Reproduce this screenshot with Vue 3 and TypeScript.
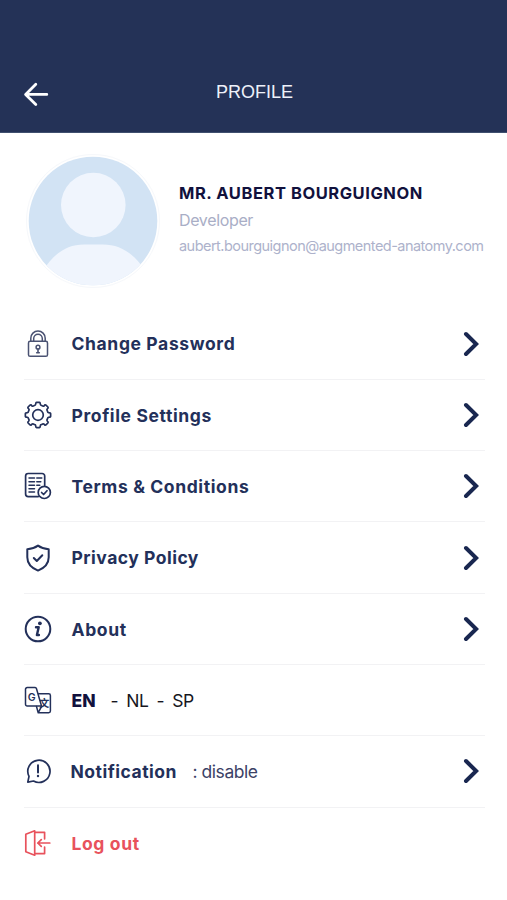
<script setup lang="ts">
interface MenuItem {
  id: string
  label: string
  chevron?: boolean
  status?: string
  danger?: boolean
}

const items: MenuItem[] = [
  { id: 'password', label: 'Change Password', chevron: true },
  { id: 'settings', label: 'Profile Settings', chevron: true },
  { id: 'terms', label: 'Terms & Conditions', chevron: true },
  { id: 'privacy', label: 'Privacy Policy', chevron: true },
  { id: 'about', label: 'About', chevron: true },
  { id: 'language', label: 'EN' },
  { id: 'notification', label: 'Notification', status: ': disable', chevron: true },
  { id: 'logout', label: 'Log out', danger: true },
]

// Outline of an eight-toothed cog centred in the 28px icon box.
function cogPath(): string {
  const at = (deg: number, r: number): string => {
    const a = (deg * Math.PI) / 180
    return `${(14 + r * Math.cos(a)).toFixed(2)} ${(14 + r * Math.sin(a)).toFixed(2)}`
  }
  let d = `M${at(-11, 11.4)}`
  for (let i = 0; i < 8; i++) {
    const c = i * 45
    d += `Q${at(c - 11, 12.7)} ${at(c - 6, 12.7)}L${at(c + 6, 12.7)}Q${at(c + 11, 12.7)} ${at(c + 11, 11.4)}`
    d += `Q${at(c + 13, 9.8)} ${at(c + 22.5, 10.2)}Q${at(c + 32, 9.8)} ${at(c + 34, 11.4)}`
  }
  return d + 'Z'
}
const cog = cogPath()
</script>

<template>
  <main class="screen">
    <header class="bar">
      <svg class="back" viewBox="0 0 26 26">
        <path d="M23.8 13.4H2.8M12.8 3.2L2.6 13.4l10.2 10.2" />
      </svg>
      <h1>PROFILE</h1>
    </header>

    <section class="profile">
      <svg class="avatar" viewBox="0 0 136 136">
        <defs>
          <clipPath id="disc"><circle cx="68" cy="68" r="64.3" /></clipPath>
        </defs>
        <circle cx="68" cy="68" r="66.5" fill="#fff" stroke="#f6f8fb" />
        <g clip-path="url(#disc)">
          <rect width="136" height="136" fill="#d2e3f4" />
          <circle cx="68.3" cy="52" r="32.3" fill="#f0f5fd" />
          <path d="M17 119C29 100 42 91.500 59 91.500h19c17 0 31 8.500 43 27.500v20H17z" fill="#f0f5fd" />
        </g>
      </svg>
      <div class="person">
        <h2>MR. AUBERT BOURGUIGNON</h2>
        <p class="role">Developer</p>
        <p class="mail">aubert.bourguignon@augmented-anatomy.com</p>
      </div>
    </section>

    <ul class="menu">
      <li v-for="item in items" :key="item.id" :class="['row', item.id, { danger: item.danger }]">
        <svg class="icon" viewBox="0 0 28 28">
          <g v-if="item.id === 'password'" stroke-width="1.5" class="soft">
            <rect x="4.5" y="11.3" width="19" height="15" rx="1.6" />
            <path d="M6.8 11V8.200a7.200 7.200 0 0 1 14.400 0V11M9.700 11V8.600a4.300 4.300 0 0 1 8.600 0V11" />
            <circle cx="14" cy="17.2" r="1.9" />
            <path d="M14 19.300v3.400M12.700 22.700h2.600" stroke-width="1.600" />
          </g>
          <g v-else-if="item.id === 'settings'" stroke-width="1.7">
            <path :d="cog" />
            <circle cx="14" cy="14" r="5.3" />
          </g>
          <g v-else-if="item.id === 'terms'" stroke-width="1.7">
            <path d="M14.200 24.600H4.200a2.600 2.600 0 0 1-2.600-2.600V4.100a2.600 2.600 0 0 1 2.600-2.600h13.900a2.600 2.600 0 0 1 2.600 2.600v9.200" />
            <path d="M5 6.100h5.500M12.800 6.100h5M5 9.800h5.500M12.800 9.800h4M5 13.300h5.500M12.800 13.300h3M5 16.700h5.500M5 20h5.500" stroke-width="1.500" />
            <circle cx="20.3" cy="20.4" r="6.1" />
            <path d="M17.600 20.500l2 2 3.400-3.800" />
          </g>
          <g v-else-if="item.id === 'privacy'" stroke-width="2">
            <path d="M14 1.600c3.200 2.400 6.600 3.300 10.700 3.600v8.100c0 6.500-4.200 10.700-10.700 13.300C7.500 24 3.300 19.800 3.300 13.300V5.200C7.400 4.900 10.800 4 14 1.600z" />
            <path d="M9.800 14l3 3 5.500-5.700" />
          </g>
          <g v-else-if="item.id === 'about'">
            <circle cx="14" cy="14" r="12.3" stroke-width="2" />
            <circle class="solid" cx="15.9" cy="8.3" r="1.9" />
            <path d="M12 12.200h2.700l-1.800 7.800h2" stroke-width="2.4" />
          </g>
          <g v-else-if="item.id === 'language'" stroke-width="1.5">
            <path d="M3.200 1.600h7.800a1.500 1.500 0 0 1 1.500 1.100l5 17.300H3.200a1.700 1.700 0 0 1-1.700-1.700V3.300a1.700 1.700 0 0 1 1.700-1.700z" />
            <path d="M14.500 7.800h10.200a1.700 1.700 0 0 1 1.700 1.700v15.500a1.700 1.700 0 0 1-1.700 1.700H14.200L12.500 20.500M14.400 26.400l3.200-6" />
            <text x="3.800" y="14.800" class="glyph latin">G</text>
            <text x="15.200" y="20.800" class="glyph han">文</text>
          </g>
          <g v-else-if="item.id === 'notification'" stroke-width="1.7">
            <path d="M3.800 25.100L5 19.300A11.100 11.100 0 1 1 9.500 24z" />
            <path d="M14 8.200v7.300" stroke-width="2" />
            <circle class="solid" cx="14" cy="19" r="1.2" />
          </g>
          <g v-else stroke-width="1.7">
            <path d="M1.800 5.300l8.900-3.500v24.400l-8.900-3.500zM10.700 3.300h9.900v6.500M10.700 24.600h9.900v-6.400" />
            <path d="M25.800 14H13.700M17.300 10.700L13.800 14l3.500 3.300" />
          </g>
        </svg>
        <span class="label">{{ item.label }}</span>
        <span v-if="item.id === 'language'" class="others">
          <i>-</i><span>NL</span><i>-</i><span>SP</span>
        </span>
        <span v-if="item.status" class="status">{{ item.status }}</span>
        <svg v-if="item.chevron" class="chevron" viewBox="0 0 16 26">
          <path d="M3 3l10.200 10L3 23" />
        </svg>
      </li>
    </ul>
  </main>
</template>

<style>
body {
  background: #fff;
}
</style>

<style scoped>
.screen {
  box-sizing: border-box;
  width: 100%;
  height: 900px;
  overflow: hidden;
  background: #fff;
  color: #23305a;
  font-family: Inter, 'Liberation Sans', sans-serif;
}
h1, h2, p, ul {
  margin: 0;
  padding: 0;
}
svg {
  display: block;
  flex: none;
  fill: none;
}
.bar {
  box-sizing: border-box;
  display: grid;
  grid-template-columns: 26px 1fr 26px;
  height: 133px;
  padding: 81px 21px 0 23px;
  background: #243257;
  border-bottom: 1px solid #40506f;
}
.back {
  width: 26px;
  height: 26px;
  stroke: #fff;
  stroke-width: 2.8;
  stroke-linecap: round;
  stroke-linejoin: round;
}
h1 {
  color: #eef1fa;
  font: 400 18px/22px 'Liberation Sans', sans-serif;
  text-align: center;
}
.profile {
  box-sizing: border-box;
  display: flex;
  height: 175.5px;
  padding: 20px 0 0 25px;
}
.avatar {
  width: 136px;
  height: 136px;
}
.person {
  padding: 28px 0 0 18px;
  white-space: nowrap;
}
h2 {
  color: #11113d;
  font-size: 16.5px;
  font-weight: 700;
  line-height: 24px;
  letter-spacing: 0.55px;
}
.role {
  margin-top: 3px;
  color: #a9aec6;
  font-size: 16px;
  line-height: 24px;
  letter-spacing: -0.35px;
}
.mail {
  margin-top: 3px;
  color: #adb2cb;
  font-size: 14.5px;
  line-height: 22px;
  letter-spacing: -0.53px;
}
.menu {
  padding: 0 22px 0 24px;
  list-style: none;
}
.row {
  box-sizing: border-box;
  display: flex;
  align-items: center;
  height: 71.3px;
  border-bottom: 1px solid #f2f2f4;
  font-size: 17.5px;
  line-height: 24px;
  white-space: nowrap;
}
.row:last-child {
  border-bottom: 0;
}
.icon {
  width: 28px;
  height: 28px;
  margin-right: 19.5px;
  stroke: currentColor;
  stroke-linecap: round;
  stroke-linejoin: round;
}
.soft {
  stroke: #4a5272;
}
.solid {
  fill: currentColor;
  stroke: none;
}
.glyph {
  fill: currentColor;
  stroke: none;
  font-weight: 600;
}
.latin {
  font-size: 10.5px;
}
.han {
  font-family: 'Noto Sans CJK SC', sans-serif;
  font-size: 10px;
}
.label,
.others,
.status {
  padding-top: 1.5px;
}
.label {
  font-weight: 700;
  letter-spacing: 0.62px;
}
.privacy .label {
  letter-spacing: 0.5px;
}
.notification .label {
  margin-left: -1px;
  letter-spacing: 0.5px;
}
.language .label {
  color: #11113d;
  font-weight: 800;
  letter-spacing: 0;
}
.others {
  display: flex;
  gap: 8px;
  margin-left: 15px;
  color: #16161e;
  letter-spacing: -0.4px;
}
.others i {
  font-style: normal;
}
.status {
  margin-left: 15.5px;
  color: #3c4266;
  letter-spacing: -0.45px;
}
.chevron {
  width: 16px;
  height: 26px;
  margin-left: auto;
  margin-right: 6px;
  stroke: #192750;
  stroke-width: 4;
  stroke-linecap: round;
  stroke-linejoin: miter;
}
.danger {
  color: #e8525c;
}
</style>
